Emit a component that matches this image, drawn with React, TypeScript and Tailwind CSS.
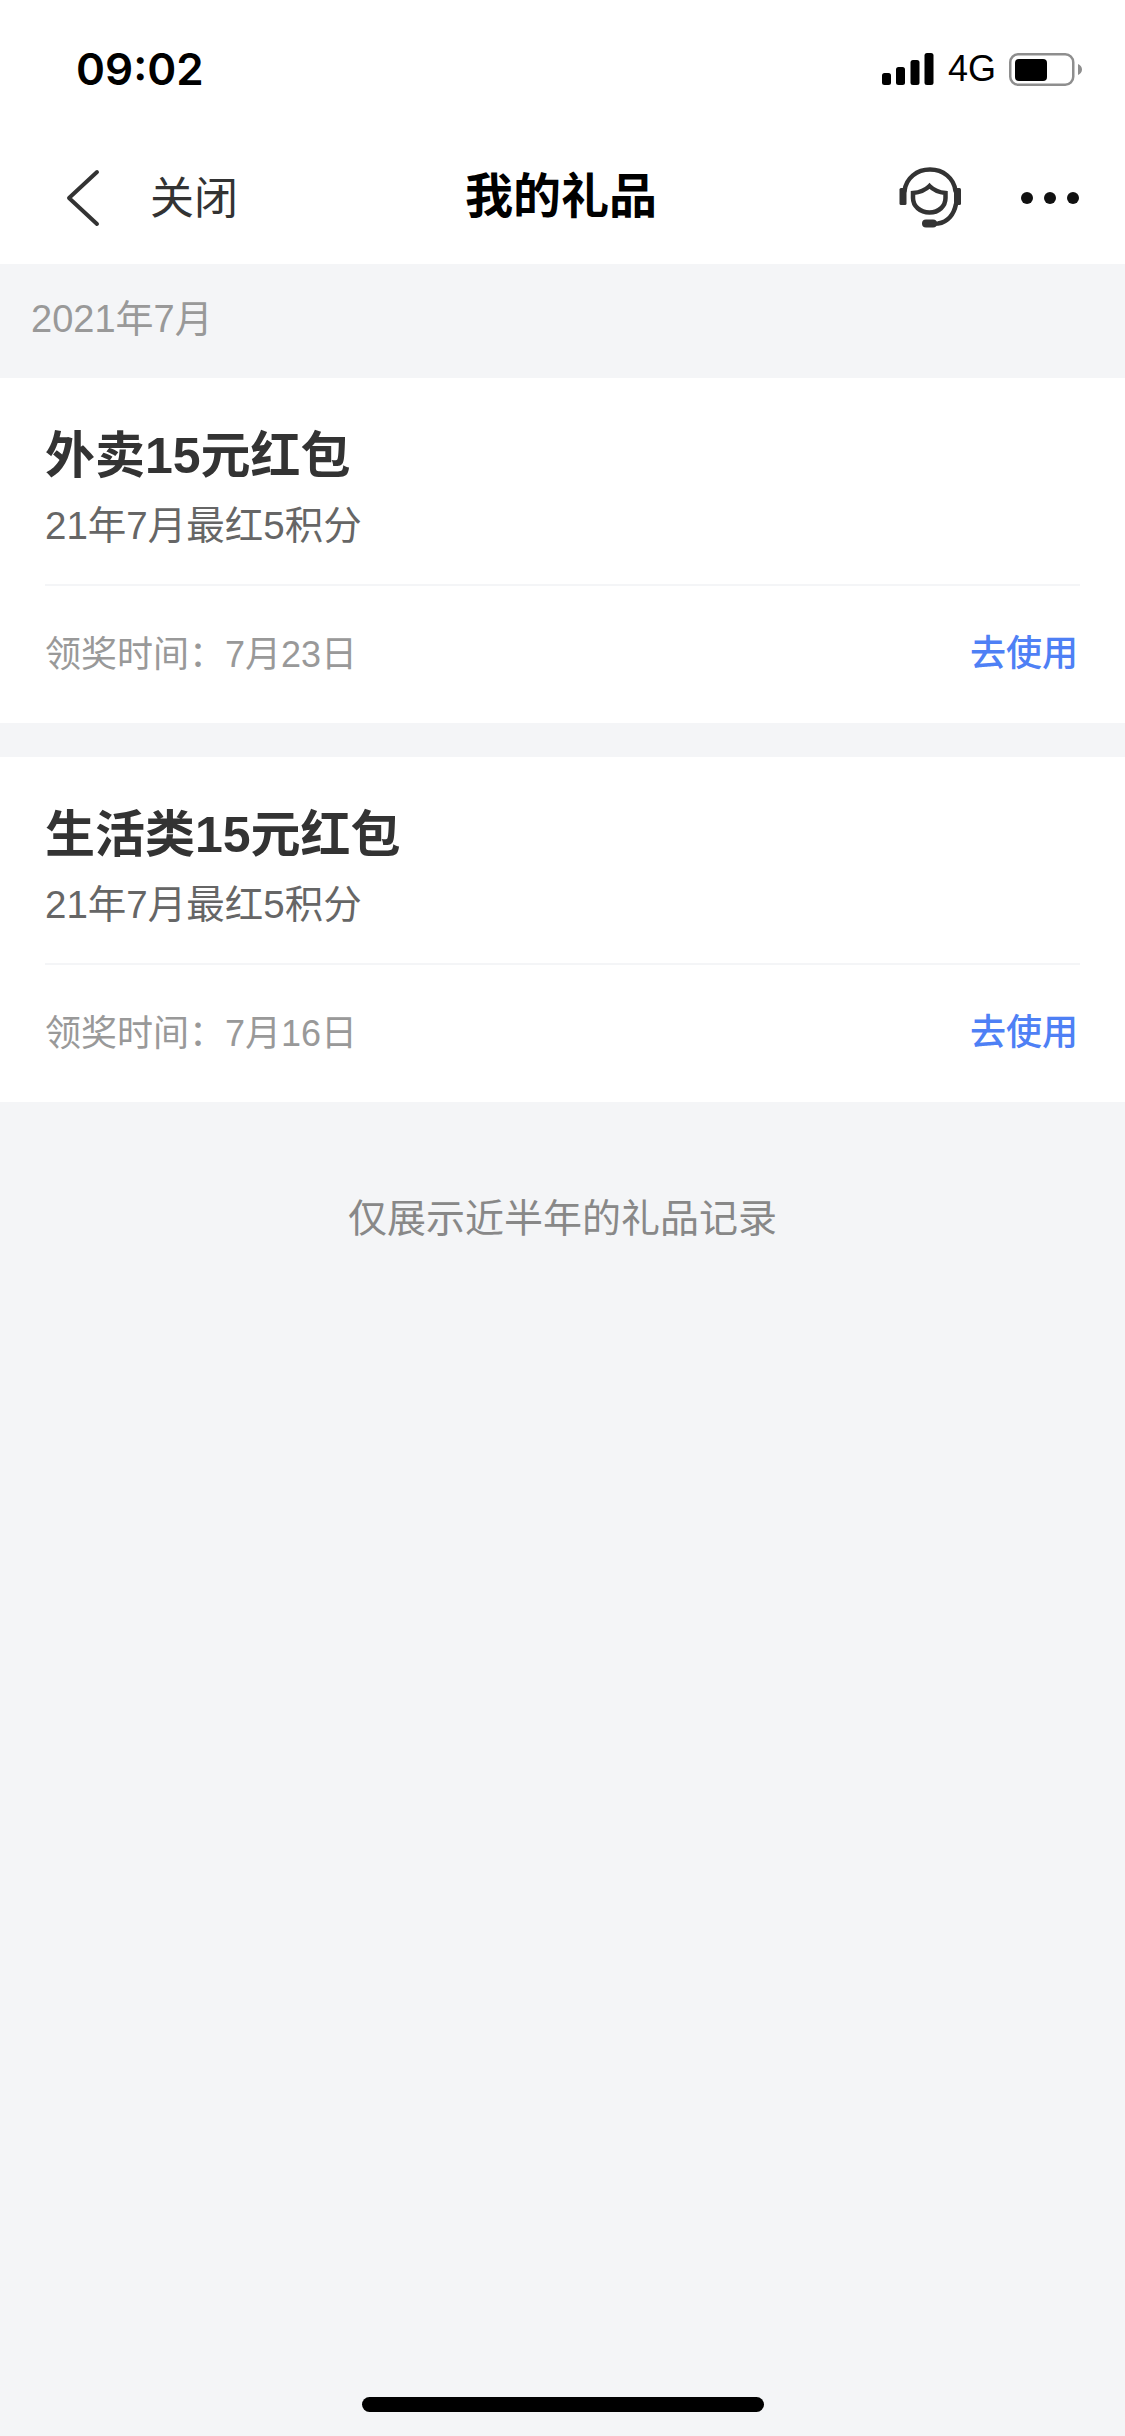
const cjk = "font-['Liberation_Sans','Noto_Sans_CJK_SC',sans-serif]";

function StatusBar() {
  return (
    <div className="flex h-[136px] items-center justify-between pl-[76px] pr-[43px] pt-[2px]">
      <span className="text-[44px] font-semibold leading-none text-black font-['Inter',sans-serif]">09:02</span>
      <div className="flex items-center">
        <svg width="52" height="32" viewBox="0 0 52 32" fill="#000">
          <rect x="0" y="20" width="9" height="12" rx="2.5" />
          <rect x="14" y="14" width="9" height="18" rx="2.5" />
          <rect x="28.500" y="7" width="9" height="25" rx="2.5" />
          <rect x="42.500" y="0" width="9" height="32" rx="2.5" />
        </svg>
        <span className="ml-[14px] text-[36px] leading-none text-black font-['Liberation_Sans',sans-serif]">4G</span>
        <svg className="ml-[13px]" width="73" height="33" viewBox="0 0 73 33">
          <rect x="1.250" y="1.250" width="63" height="30.500" rx="8" fill="none" stroke="#8e8e8e" strokeWidth="2.5" />
          <rect x="6" y="6" width="32" height="22" rx="4" fill="#000" />
          <path d="M69 11 C71.500 12 73 14 73 16.500 C73 19 71.500 21 69 22 Z" fill="#8e8e8e" />
        </svg>
      </div>
    </div>
  );
}

function NavBar() {
  return (
    <div className={`relative flex h-[128px] items-center justify-between pb-[4px] pl-[66px] pr-[46px] ${cjk}`}>
      <div className="flex items-center">
        <svg width="34" height="58" viewBox="0 0 34 58" fill="none" stroke="#333333" strokeWidth="4" strokeLinecap="round" strokeLinejoin="round">
          <path d="M31 3 L3 29 L31 55" />
        </svg>
        <span className="ml-[50px] mt-[2px] text-[44px] leading-none text-[#333333]">关闭</span>
      </div>
      <span className="absolute left-[465px] top-[37px] text-[48px] font-bold leading-none text-black">我的礼品</span>
      <div className="flex items-center">
        <svg width="62" height="62" viewBox="0 0 62 62" fill="none" stroke="#333333" strokeWidth="4.500" strokeLinecap="round">
          <path d="M5.500 24 C7 11 18 2.500 31 2.500 C44 2.500 55 11 56.500 24" />
          <path d="M57 37 C55 47 49 55 39 56.500 L30 57" />
          <path d="M30.500 19 C26 23.500 20 25.500 14 26 L14 31 C14 39 21 45.500 30.500 45.500 C40 45.500 46.500 39 46.500 31 L46.500 26 C41 25.500 35 23.500 30.500 19 Z" />
          <rect x="0.500" y="21" width="7" height="17" rx="1.500" fill="#333333" stroke="none" />
          <rect x="55" y="21" width="7" height="17" rx="1.500" fill="#333333" stroke="none" />
          <rect x="23" y="52.500" width="15" height="8" rx="4" fill="#333333" stroke="none" />
        </svg>
        <div className="ml-[60px] flex gap-[11px]">
          <span className="h-[12px] w-[12px] rounded-full bg-[#111111]" />
          <span className="h-[12px] w-[12px] rounded-full bg-[#111111]" />
          <span className="h-[12px] w-[12px] rounded-full bg-[#111111]" />
        </div>
      </div>
    </div>
  );
}

function GiftCard({ title, date }: { title: string; date: string }) {
  return (
    <div className="h-[345px] bg-white px-[45px]">
      <div className="h-[208px] border-b-2 border-[#f4f5f7] pt-[49px]">
        <div className="text-[50px] font-bold leading-[58px] text-[#333333]">{title}</div>
        <div className="mt-[19px] text-[38.500px] leading-[44px] text-[#666666]">21年7月最红5积分</div>
      </div>
      <div className="flex h-[137px] items-center justify-between pr-[2px]">
        <span className="text-[36px] leading-none text-[#999999]">领奖时间：7月{date}日</span>
        <span className="mb-[2px] text-[36px] font-medium leading-none text-[#4e80f5]">去使用</span>
      </div>
    </div>
  );
}

export default function App() {
  return (
    <div className={`relative flex h-[2436px] w-[1125px] flex-col overflow-hidden bg-[#f4f5f7] ${cjk}`}>
      <div className="bg-white">
        <StatusBar />
        <NavBar />
      </div>
      <div className="flex h-[114px] items-center pb-[4px] pl-[31px] text-[38px] leading-none text-[#999999]">2021年7月</div>
      <div className="flex flex-col gap-[34px]">
        <GiftCard title="外卖15元红包" date="23" />
        <GiftCard title="生活类15元红包" date="16" />
      </div>
      <div className="mt-[97px] text-center text-[39px] leading-none text-[#888888]">仅展示近半年的礼品记录</div>
      <div className="absolute bottom-[24px] left-[362px] h-[15px] w-[402px] rounded-full bg-black" />
    </div>
  );
}
